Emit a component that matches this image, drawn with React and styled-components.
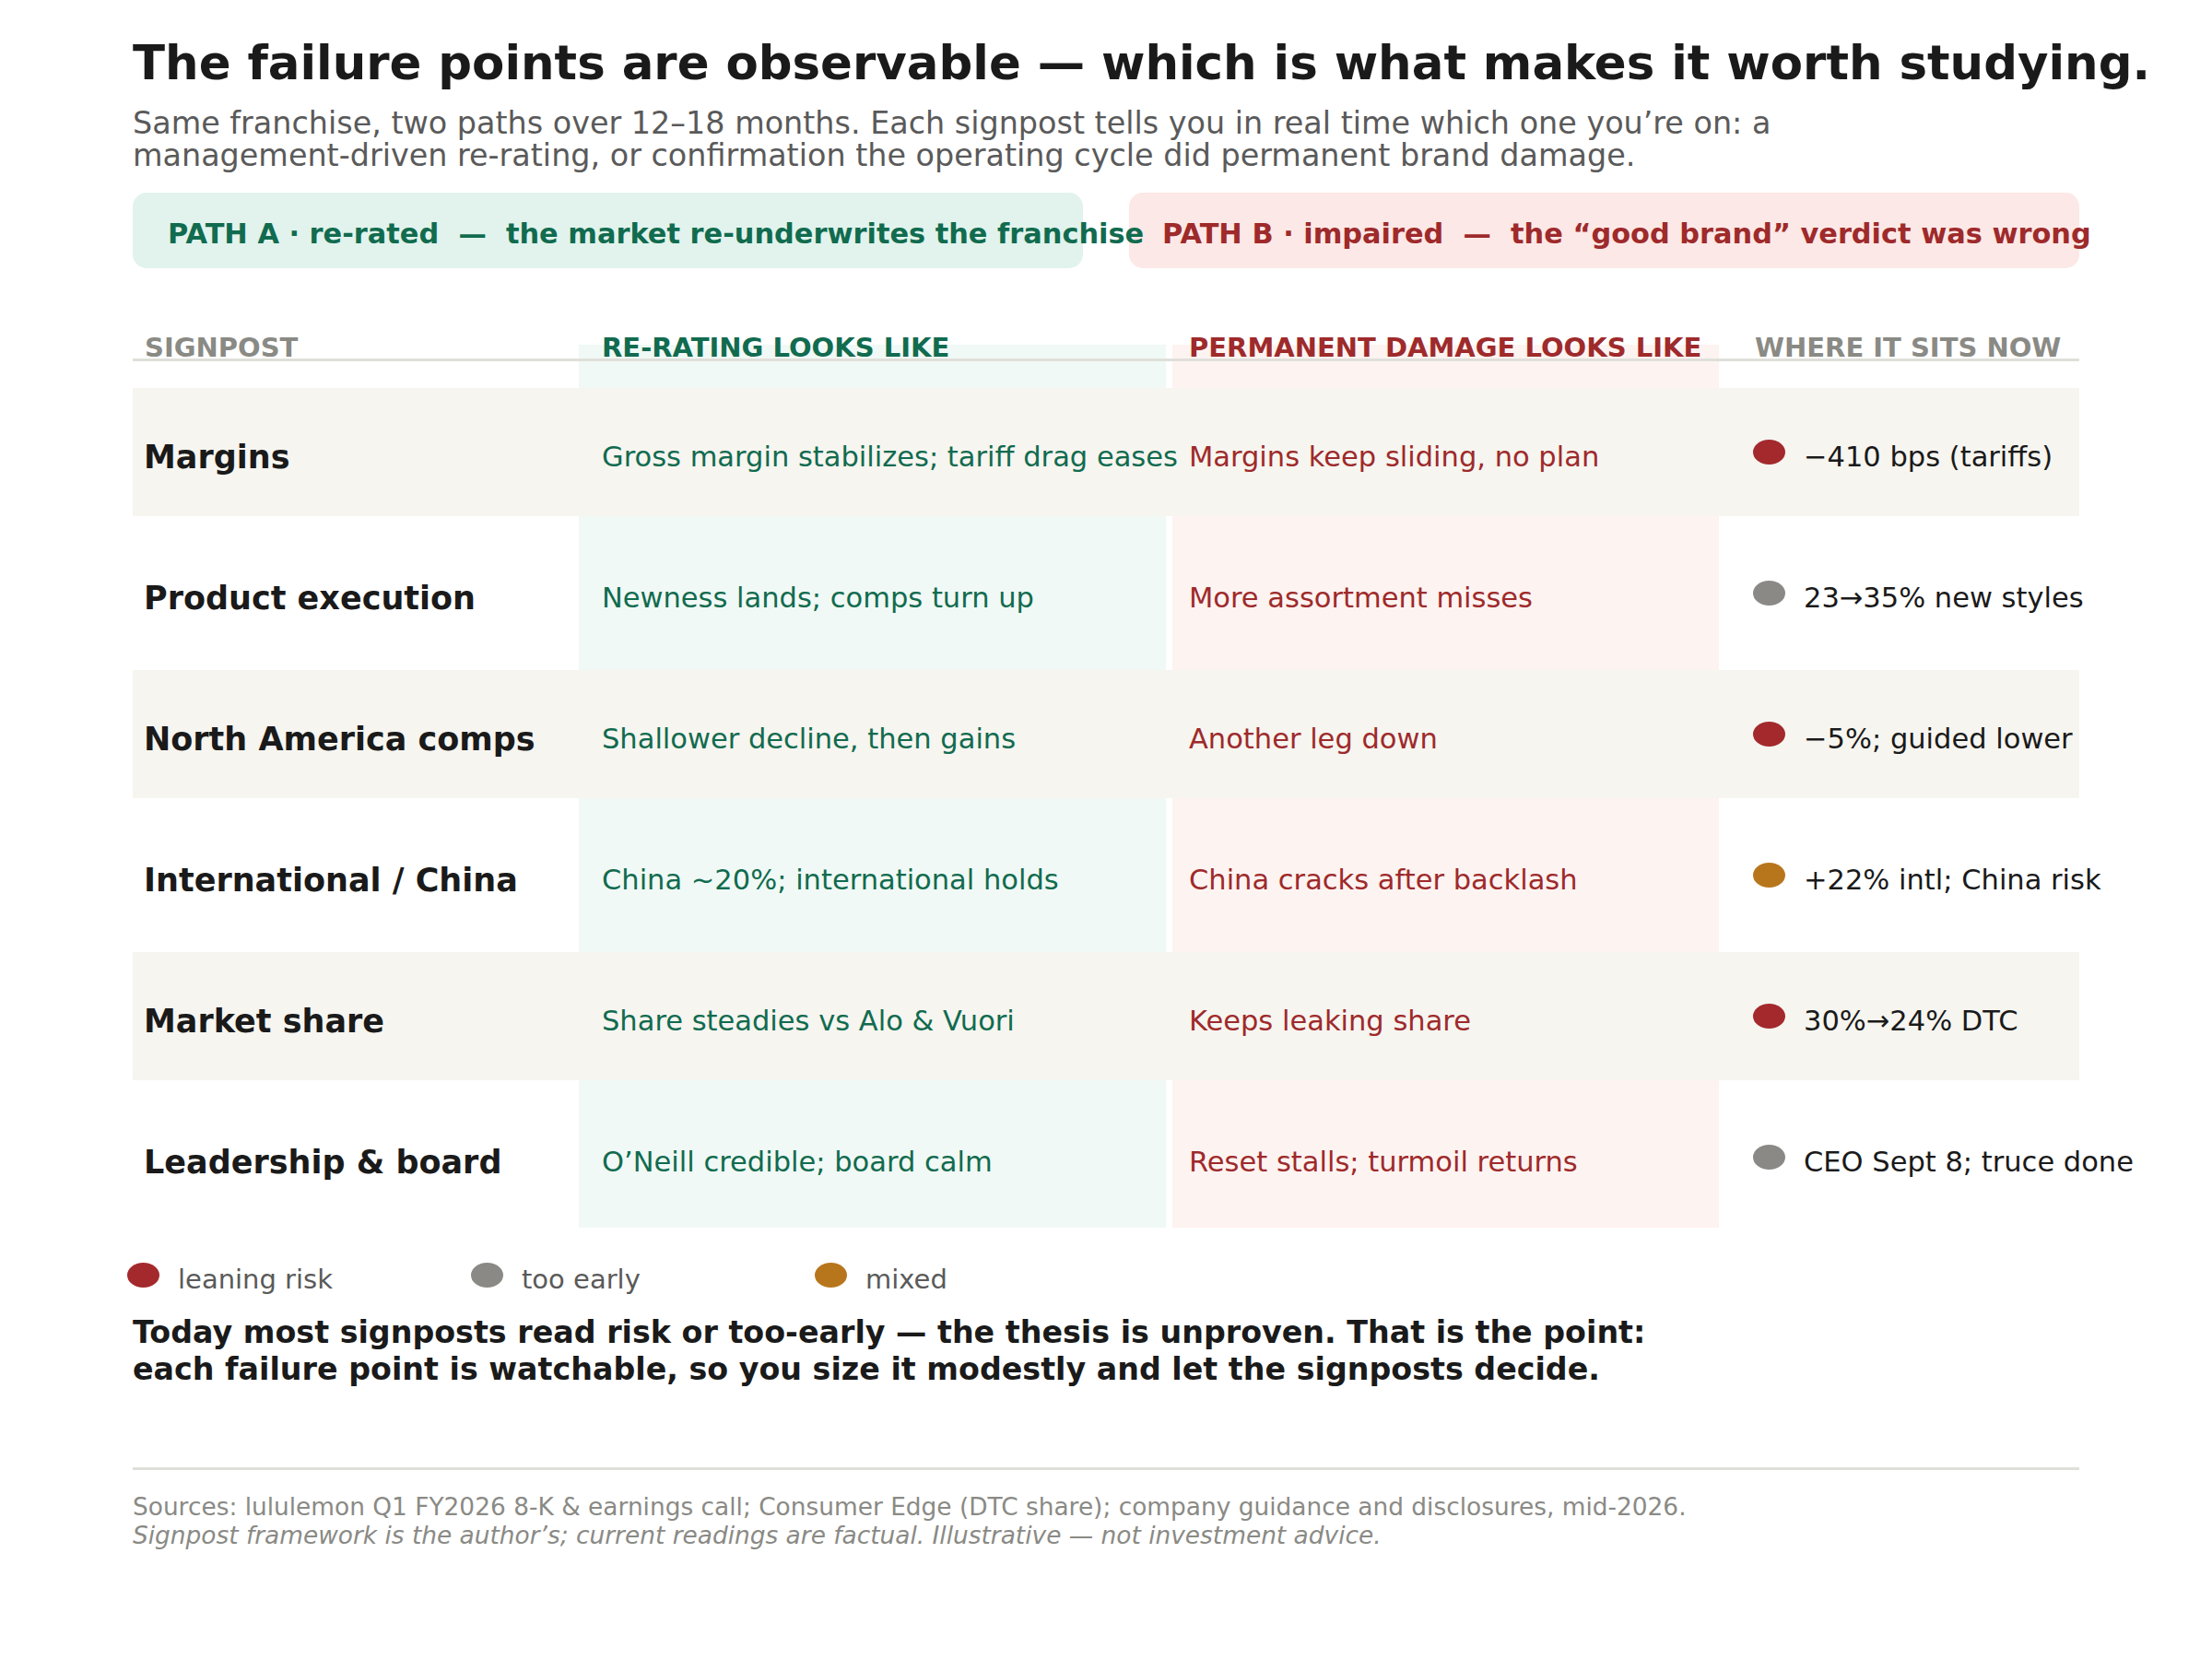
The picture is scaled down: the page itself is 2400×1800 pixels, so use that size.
import React from "react";
import styled, { createGlobalStyle } from "styled-components";

const GlobalStyle = createGlobalStyle`
  body {
    margin: 0;
    background: #ffffff;
    font-family: "DejaVu Sans", "Noto Sans", sans-serif;
  }
`;

const colors = {
  ink: "#1a1a1a",
  sub: "#5a5a5a",
  muted: "#8a8a85",
  green: "#116b4f",
  red: "#9e2a2b",
  greenBox: "#e1f3ec",
  redBox: "#fce8e6",
  greenTint: "#f0f9f5",
  redTint: "#fdf3f1",
  band: "#f6f5f0",
  rule: "#dfdfd9",
};

const dotColors = {
  risk: "#a3292c",
  early: "#8a8985",
  mixed: "#b8761c",
};

const Page = styled.div`
  width: 2400px;
  box-sizing: border-box;
  padding: 38px 144px 80px;
`;

const Title = styled.h1`
  margin: 0;
  font-size: 51.4px;
  line-height: 60px;
  font-weight: bold;
  color: ${colors.ink};
  white-space: nowrap;
`;

const Subtitle = styled.p`
  margin: 18px 0 0;
  font-size: 33.4px;
  line-height: 35px;
  color: ${colors.sub};
  white-space: nowrap;
`;

const Paths = styled.div`
  display: grid;
  grid-template-columns: minmax(0, 1fr) minmax(0, 1fr);
  gap: 50px;
  margin-top: 23px;
`;

const PathBox = styled.div`
  height: 82px;
  min-width: 0;
  box-sizing: border-box;
  padding: 9px 0 0 ${(p) => (p.$tone === "green" ? 38 : 36)}px;
  border-radius: 15px;
  background: ${(p) => (p.$tone === "green" ? colors.greenBox : colors.redBox)};
  color: ${(p) => (p.$tone === "green" ? colors.green : colors.red)};
  font-size: 30.4px;
  line-height: 72px;
  font-weight: bold;
  white-space: nowrap;
`;

/* the label runs past its box, so keep it painted above the neighbouring box */
const PathLabel = styled.span`
  position: relative;
  z-index: 1;
`;

const Table = styled.div`
  margin-top: 74px;
  padding-bottom: 7px;
  background-image: linear-gradient(
    to right,
    transparent 484px,
    ${colors.greenTint} 484px,
    ${colors.greenTint} 1121px,
    transparent 1121px,
    transparent 1128px,
    ${colors.redTint} 1128px,
    ${colors.redTint} 1721px,
    transparent 1721px
  );
  background-repeat: no-repeat;
  background-position: 0 9px;
  background-size: 100% calc(100% - 9px);
`;

const Columns = "496px 637px 614px minmax(0, 1fr)";

const HeaderRow = styled.div`
  display: grid;
  grid-template-columns: ${Columns};
  border-bottom: 3px solid ${colors.rule};
`;

const HeadCell = styled.div`
  padding-left: 13px;
  font-size: 29px;
  line-height: 24px;
  font-weight: bold;
  white-space: nowrap;
  color: ${(p) =>
    p.$tone === "green" ? colors.green : p.$tone === "red" ? colors.red : colors.muted};
`;

const Rows = styled.div`
  display: flex;
  flex-direction: column;
  gap: 14px;
  margin-top: 29px;
`;

const Row = styled.div`
  display: grid;
  grid-template-columns: ${Columns};
  align-items: center;
  height: 139px;
  background: ${(p) => (p.$shaded ? colors.band : "transparent")};
`;

const Label = styled.div`
  padding: 10px 0 0 12px;
  font-size: 35px;
  font-weight: bold;
  color: ${colors.ink};
  white-space: nowrap;
`;

const Reading = styled.div`
  padding: 10px 0 0 13px;
  font-size: 30.5px;
  white-space: nowrap;
  color: ${(p) => (p.$tone === "green" ? colors.green : colors.red)};
`;

const Status = styled.div`
  display: flex;
  align-items: center;
  gap: 20px;
  padding-left: 11px;
  white-space: nowrap;
`;

const Dot = styled.span`
  flex: none;
  width: 35px;
  height: 27px;
  border-radius: 50%;
  background: ${(p) => dotColors[p.$kind]};
`;

const StatusText = styled.span`
  padding-top: 10px;
  font-size: 30.5px;
  color: ${colors.ink};
`;

const Legend = styled.div`
  display: flex;
  margin: 32px 0 0 -6px;
`;

const LegendItem = styled.div`
  display: flex;
  align-items: center;
  gap: 20px;
  width: 373px;
`;

const LegendText = styled.span`
  padding-top: 10px;
  font-size: 29px;
  line-height: 28px;
  color: ${colors.sub};
`;

const Conclusion = styled.p`
  margin: 24px 0 0;
  font-size: 33.3px;
  line-height: 40px;
  font-weight: bold;
  color: ${colors.ink};
  white-space: nowrap;
`;

const Footer = styled.footer`
  margin-top: 86px;
  padding-top: 24px;
  border-top: 3px solid ${colors.rule};
  font-size: 26.4px;
  line-height: 31px;
  color: ${colors.muted};
  white-space: nowrap;
`;

const Note = styled.div`
  font-style: ${(p) => (p.$italic ? "italic" : "normal")};
`;

const rows = [
  {
    label: "Margins",
    good: "Gross margin stabilizes; tariff drag eases",
    bad: "Margins keep sliding, no plan",
    status: "risk",
    now: "−410 bps (tariffs)",
  },
  {
    label: "Product execution",
    good: "Newness lands; comps turn up",
    bad: "More assortment misses",
    status: "early",
    now: "23→35% new styles",
  },
  {
    label: "North America comps",
    good: "Shallower decline, then gains",
    bad: "Another leg down",
    status: "risk",
    now: "−5%; guided lower",
  },
  {
    label: "International / China",
    good: "China ~20%; international holds",
    bad: "China cracks after backlash",
    status: "mixed",
    now: "+22% intl; China risk",
  },
  {
    label: "Market share",
    good: "Share steadies vs Alo & Vuori",
    bad: "Keeps leaking share",
    status: "risk",
    now: "30%→24% DTC",
  },
  {
    label: "Leadership & board",
    good: "O’Neill credible; board calm",
    bad: "Reset stalls; turmoil returns",
    status: "early",
    now: "CEO Sept 8; truce done",
  },
];

const legend = [
  { kind: "risk", text: "leaning risk" },
  { kind: "early", text: "too early" },
  { kind: "mixed", text: "mixed" },
];

export default function App() {
  return (
    <>
      <GlobalStyle />
      <Page>
        <Title>The failure points are observable — which is what makes it worth studying.</Title>
        <Subtitle>
          Same franchise, two paths over 12–18 months. Each signpost tells you in real time which one you’re on: a
          <br />
          management-driven re-rating, or confirmation the operating cycle did permanent brand damage.
        </Subtitle>

        <Paths>
          <PathBox $tone="green">
            <PathLabel>PATH A · re-rated &nbsp;—&nbsp; the market re-underwrites the franchise</PathLabel>
          </PathBox>
          <PathBox $tone="red">
            <PathLabel>PATH B · impaired &nbsp;—&nbsp; the “good brand” verdict was wrong</PathLabel>
          </PathBox>
        </Paths>

        <Table>
          <HeaderRow>
            <HeadCell>SIGNPOST</HeadCell>
            <HeadCell $tone="green">RE-RATING LOOKS LIKE</HeadCell>
            <HeadCell $tone="red">PERMANENT DAMAGE LOOKS LIKE</HeadCell>
            <HeadCell>WHERE IT SITS NOW</HeadCell>
          </HeaderRow>
          <Rows>
            {rows.map((r, i) => (
              <Row key={r.label} $shaded={i % 2 === 0}>
                <Label>{r.label}</Label>
                <Reading $tone="green">{r.good}</Reading>
                <Reading $tone="red">{r.bad}</Reading>
                <Status>
                  <Dot $kind={r.status} />
                  <StatusText>{r.now}</StatusText>
                </Status>
              </Row>
            ))}
          </Rows>
        </Table>

        <Legend>
          {legend.map((l) => (
            <LegendItem key={l.kind}>
              <Dot $kind={l.kind} />
              <LegendText>{l.text}</LegendText>
            </LegendItem>
          ))}
        </Legend>

        <Conclusion>
          Today most signposts read risk or too-early — the thesis is unproven. That is the point:
          <br />
          each failure point is watchable, so you size it modestly and let the signposts decide.
        </Conclusion>

        <Footer>
          <Note>
            Sources: lululemon Q1 FY2026 8-K &amp; earnings call; Consumer Edge (DTC share); company guidance and
            disclosures, mid-2026.
          </Note>
          <Note $italic>
            Signpost framework is the author’s; current readings are factual. Illustrative — not investment advice.
          </Note>
        </Footer>
      </Page>
    </>
  );
}
